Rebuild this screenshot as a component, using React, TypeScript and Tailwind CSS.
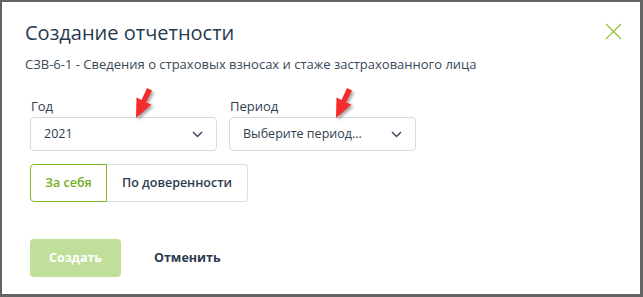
import React from "react";

function Chevron() {
  return (
    <svg width="11" height="7" viewBox="0 0 11 7" fill="none">
      <path d="M1 1 L5.5 5.5 L10 1" stroke="#3d4b5c" strokeWidth="1.5" />
    </svg>
  );
}

function RedArrow() {
  return (
    <svg width="28" height="38" viewBox="0 0 28 38" style={{ filter: "drop-shadow(2px 2px 1.5px rgba(0,0,0,0.35))" }}>
      <polygon points="3,32 3.5,11.5 8.5,14 14,2 19,4.5 13,16.5 18.5,18.5" fill="#f62b2b" />
    </svg>
  );
}

function Select({ label, value }: { label: string; value: string }) {
  return (
    <div className="flex flex-col w-[187px]">
      <div className="text-[13px] leading-[16px] text-[#2f3e4e] pl-[1px]">{label}</div>
      <div className="mt-[3px] h-[34px] rounded-[4px] border border-[#d5dbe2] flex items-center justify-between pl-[13px] pr-[13px] text-[12.5px] text-[#2f3e4e]">
        <span>{value}</span>
        <Chevron />
      </div>
    </div>
  );
}

export default function App() {
  return (
    <div className="w-[643px] h-[297px] bg-[#646464] pl-[2px] pt-[2px] pr-[3px] pb-[3px]" style={{ fontFamily: '"Open Sans", "Noto Sans", sans-serif' }}>
      <div className="relative w-full h-full bg-white pl-[23px] pt-[17px]">
        <div className="flex items-start justify-between pr-[18px]">
          <div className="text-[20px] leading-[28px] font-medium text-[#283a4f]">Создание отчетности</div>
          <svg width="17" height="17" viewBox="0 0 17 17" className="mt-[4px]">
            <path d="M1 1 L16 16 M16 1 L1 16" stroke="#8cc63f" strokeWidth="1.3" />
          </svg>
        </div>
        <div className="mt-[9px] text-[13px] leading-[16px] text-[#3a4858]">СЗВ-6-1 - Сведения о страховых взносах и стаже застрахованного лица</div>
        <div className="mt-[26px] flex gap-[12px] pl-[5px]">
          <Select label="Год" value="2021" />
          <Select label="Период" value="Выберите период..." />
        </div>
        <div className="mt-[13px] ml-[5px] flex h-[38px] w-[218px] text-[12.5px] font-semibold">
          <div className="w-[77px] flex items-center justify-center border border-[#7ab72a] rounded-l-[4px] text-[#6fb020]">За себя</div>
          <div className="flex-1 flex items-center justify-center border border-l-0 border-[#dcdfe3] rounded-r-[4px] text-[#2b3c50]">По доверенности</div>
        </div>
        <div className="mt-[37px] ml-[5px] flex items-center">
          <div className="w-[91px] h-[38px] rounded-[4px] bg-[#bfdf9a] flex items-center justify-center text-white font-bold text-[12.5px]">Создать</div>
          <div className="ml-[33px] text-[#2b3c50] font-bold text-[12.5px]">Отменить</div>
        </div>
        <div className="absolute left-[131px] top-[84px]"><RedArrow /></div>
        <div className="absolute left-[331px] top-[84px]"><RedArrow /></div>
      </div>
    </div>
  );
}
